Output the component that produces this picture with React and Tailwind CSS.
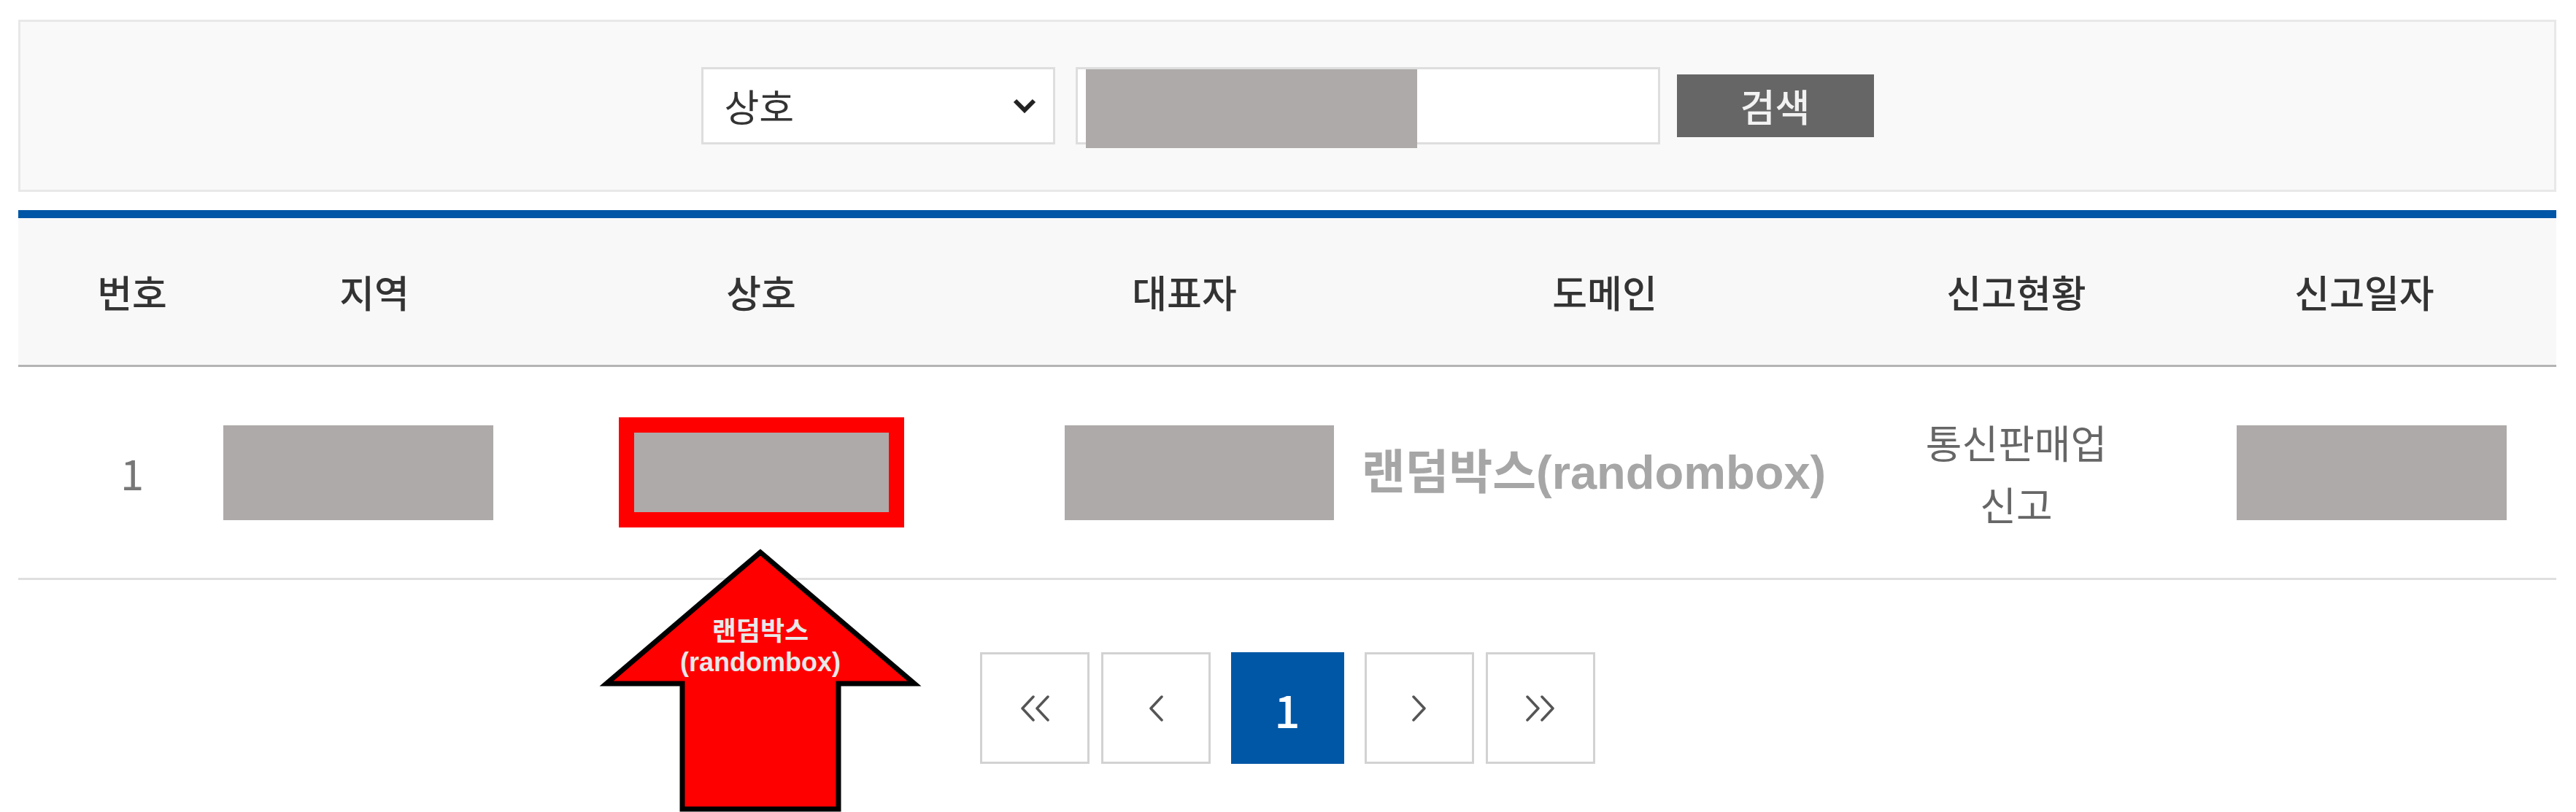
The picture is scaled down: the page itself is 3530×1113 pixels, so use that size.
export default function App() {
  const cols = "grid grid-cols-[312px_352px_708px_452px_700px_428px_526px]";
  const headers = ["번호", "지역", "상호", "대표자", "도메인", "신고현황", "신고일자"];
  const Chev = ({ dir = "left" }) => (
    <svg width="22" height="36" viewBox="0 0 22 36">
      <path
        d={dir === "left" ? "M19 2 L4 18 L19 34" : "M3 2 L18 18 L3 34"}
        fill="none"
        stroke="#555"
        strokeWidth="3.5"
        strokeLinecap="round"
        strokeLinejoin="round"
      />
    </svg>
  );
  const PageBox = ({ children }) => (
    <div className="w-[150px] h-[153px] border-[3px] border-[#d2d2d2] bg-white flex items-center justify-center">
      {children}
    </div>
  );
  return (
    <div className="relative w-[3530px] h-[1113px] overflow-hidden bg-white font-['Noto_Sans_CJK_KR','Noto_Sans',sans-serif]">
      <div className="ml-[25px] mr-[27px] pt-[27px]">
        {/* search box */}
        <div className="h-[236px] border-[3px] border-[#e8e8e8] bg-[#f9f9f9] flex items-center justify-center">
          <div className="flex items-center">
            <div className="w-[485px] h-[106px] bg-white border-[3px] border-[#dedede] flex items-center justify-between pl-[29px] pr-[22px]">
              <span className="text-[52px] text-[#333] leading-none">상호</span>
              <svg width="34" height="22" viewBox="0 0 34 22">
                <path d="M4 4 L17 17 L30 4" fill="none" stroke="#222" strokeWidth="6" />
              </svg>
            </div>
            <div className="ml-[28px] w-[801px] h-[106px] bg-white border-[3px] border-[#dedede]">
              <div className="ml-[11px] w-[454px] h-[108px] bg-[#aeaaa9]" />
            </div>
            <button className="ml-[23px] w-[270px] h-[86px] bg-[#666666] text-[#f2f2f2] text-[52px] leading-none font-medium">
              검색
            </button>
          </div>
        </div>

        {/* blue bar */}
        <div className="mt-[25px] h-[11px] bg-[#0056a6]" />

        {/* header */}
        <div className={`${cols} h-[204px] bg-[#f8f8f8] border-b-[3px] border-[#b4b4b4]`}>
          {headers.map((h) => (
            <div key={h} className="flex items-center justify-center text-[52px] font-medium text-[#333]">
              {h}
            </div>
          ))}
        </div>

        {/* data row */}
        <div className={`${cols} h-[292px] border-b-[3px] border-[#dfdfdf]`}>
          <div className="flex items-center justify-center text-[58px] text-[#777]">1</div>
          <div className="flex items-center justify-center">
            <div className="shrink-0 w-[370px] h-[130px] bg-[#aeaaa9] -translate-x-[22px]" />
          </div>
          <div className="flex items-center justify-center">
            <div className="shrink-0 w-[391px] h-[151px] border-[21px] border-[#ff0000] bg-[#aeaaa9]" />
          </div>
          <div className="flex items-center justify-center">
            <div className="shrink-0 w-[369px] h-[130px] bg-[#aeaaa9] translate-x-[20px]" />
          </div>
          <div className="flex items-center justify-center">
            <span className="whitespace-nowrap text-[65px] font-bold text-[#a6a6a6] -translate-x-[15px] font-['Liberation_Sans','Noto_Sans_CJK_KR',sans-serif]">
              랜덤박스(randombox)
            </span>
          </div>
          <div className="flex items-center justify-center text-center text-[54px] leading-[85px] text-[#666]">
            <div>
              통신판매업
              <br />
              신고
            </div>
          </div>
          <div className="flex items-center justify-center">
            <div className="shrink-0 w-[370px] h-[130px] bg-[#aeaaa9] translate-x-[10px]" />
          </div>
        </div>

        {/* pagination */}
        <div className="mt-[99px] flex justify-center items-center">
          <div className="flex gap-[16px]">
            <PageBox>
              <div className="flex -space-x-[2px]">
                <Chev dir="left" />
                <Chev dir="left" />
              </div>
            </PageBox>
            <PageBox>
              <Chev dir="left" />
            </PageBox>
          </div>
          <div className="mx-[28px] w-[155px] h-[153px] bg-[#0057a6] flex items-center justify-center text-white text-[62px] leading-none font-medium">
            1
          </div>
          <div className="flex gap-[16px]">
            <PageBox>
              <Chev dir="right" />
            </PageBox>
            <PageBox>
              <div className="flex -space-x-[2px]">
                <Chev dir="right" />
                <Chev dir="right" />
              </div>
            </PageBox>
          </div>
        </div>
      </div>

      {/* annotation arrow */}
      <svg
        className="absolute left-[818px] top-[748px]"
        width="448"
        height="365"
        viewBox="0 0 448 365"
      >
        <polygon
          points="224,9 13,189 117,189 117,361 331,361 331,189 435,189"
          fill="#ff0000"
          stroke="#000"
          strokeWidth="7"
          strokeLinejoin="miter"
        />
        <text
          x="224"
          y="130"
          textAnchor="middle"
          fill="#e8e8e8"
          fontSize="36"
          fontWeight="700"
          fontFamily="'Liberation Sans','Noto Sans CJK KR',sans-serif"
        >
          랜덤박스
        </text>
        <text
          x="224"
          y="172"
          textAnchor="middle"
          fill="#e8e8e8"
          fontSize="36"
          fontWeight="700"
          fontFamily="'Liberation Sans','Noto Sans CJK KR',sans-serif"
        >
          (randombox)
        </text>
      </svg>
    </div>
  );
}
